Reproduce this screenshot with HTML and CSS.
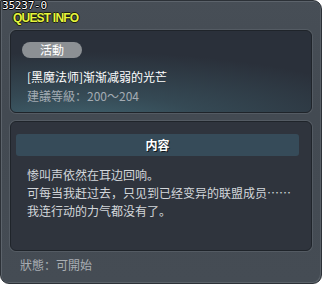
FILE: index.html
```html
<!DOCTYPE html>
<html lang="zh">
<head>
<meta charset="UTF-8">
<meta name="viewport" content="width=device-width, initial-scale=1.0">
<title>Quest Info</title>
<link rel="stylesheet" href="styles.css">
</head>
<body>

<div class="window">
    <div class="quest-id">35237-0</div>
    <div class="window-title">QUEST INFO</div>

    <div class="panel panel-top">
        <div class="tag">活動</div>
        <div class="quest-name">[黑魔法师]渐渐减弱的光芒</div>
        <div class="quest-level">建議等級：200～204</div>
    </div>

    <div class="panel panel-body">
        <div class="section-head">内容</div>
        <div class="desc">
            <p>惨叫声依然在耳边回响。</p>
            <p>可每当我赶过去，只见到已经变异的联盟成员……</p>
            <p>我连行动的力气都没有了。</p>
        </div>
    </div>

    <div class="status">狀態：可開始</div>
</div>

</body>
</html>
```

FILE: styles.css
```css
body {
    margin: 0;
    padding: 0;
    background: #ffffff;
    font-family: "Noto Sans CJK SC", "DejaVu Sans", sans-serif;
}
.window {
    position: relative;
    width: 322px;
    height: 284px;
    box-sizing: border-box;
    padding: 0 9px 0 9px;
    background: linear-gradient(#474e56, #434a52 40%, #454c54);
    border: 1px solid #2c3137;
    border-radius: 0 9px 9px 9px;
    box-shadow: inset 1px 1px 0 #5c636b, inset -1px -1px 0 #5a6168;
}
.quest-id {
    position: absolute;
    left: 1px;
    top: 0;
    font-family: "DejaVu Sans Mono", monospace;
    font-size: 11px;
    line-height: 10px;
    color: #ffffff;
    letter-spacing: -0.2px;
    text-shadow: 1px 0 0 #000, -1px 0 0 #000, 0 1px 0 #000, 0 -1px 0 #000;
}
.window-title {
    padding: 12px 0 0 3px;
    height: 17px;
    font-family: "Liberation Sans", sans-serif;
    font-weight: bold;
    font-size: 12px;
    line-height: 10px;
    letter-spacing: -0.8px;
    color: #e6f43c;
    text-shadow: 1px 0 0 #1a1f10, -1px 0 0 #1a1f10, 0 1px 0 #1a1f10, 0 -1px 0 #1a1f10;
}
.panel {
    border: 1px solid #1f242a;
    border-radius: 6px;
    box-shadow: 0 0 0 1px #545b63;
}
.panel-top {
    height: 83px;
    box-sizing: border-box;
    padding: 11px 0 0 11px;
    background:
        radial-gradient(ellipse 320px 70px at 22% 112%, #41636f 0%, rgba(62, 94, 106, 0.55) 40%, rgba(43, 49, 59, 0) 100%),
        #2a303a;
}
.tag {
    width: 60px;
    height: 16px;
    border-radius: 8px;
    background: #8c9094;
    color: #ffffff;
    font-size: 12px;
    line-height: 16px;
    text-align: center;
}
.quest-name {
    margin: 11px 0 0 5px;
    font-size: 12px;
    line-height: 16px;
    color: #ffffff;
    white-space: nowrap;
}
.quest-level {
    margin: 3px 0 0 5px;
    font-size: 12px;
    line-height: 16px;
    color: #a3abb3;
    white-space: nowrap;
}
.panel-body {
    margin-top: 8px;
    height: 130px;
    box-sizing: border-box;
    padding: 12px 12px 0 5px;
    background: #2f343d;
}
.section-head {
    height: 22px;
    border-radius: 3px;
    background: #364b59;
    color: #ffffff;
    font-weight: bold;
    font-size: 12px;
    line-height: 22px;
    text-align: center;
    text-shadow: 1px 1px 0 #10161c;
}
.desc {
    padding: 10px 0 0 11px;
}
.desc p {
    margin: 0;
    font-size: 12px;
    line-height: 18px;
    color: #d3d7db;
    white-space: nowrap;
}
.status {
    padding: 6px 0 0 10px;
    font-size: 12px;
    line-height: 16px;
    color: #a9aeb3;
}
```
